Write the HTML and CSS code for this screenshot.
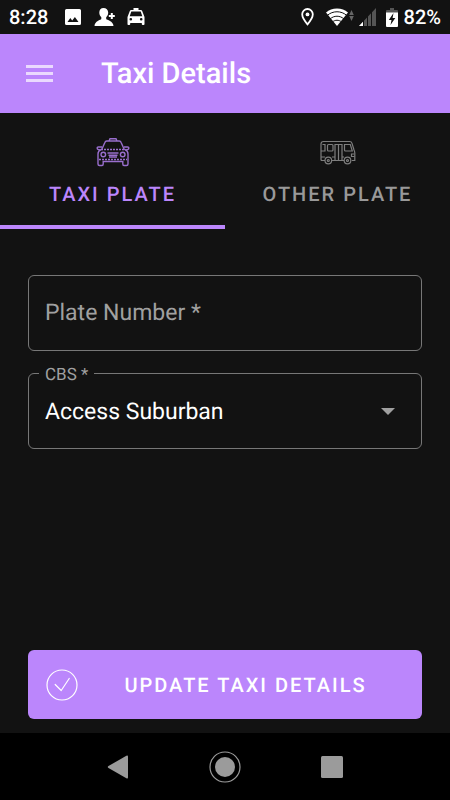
FILE: index.html
```html
<!DOCTYPE html>
<html lang="en">
<head>
    <meta charset="UTF-8">
    <meta name="viewport" content="width=device-width, initial-scale=1.0">
    <title>Taxi Details</title>
    <link rel="stylesheet" href="styles.css">
</head>
<body>
    <div class="status-bar">
        <div class="status-left">
            <span class="status-time">8:28</span>
            <svg class="status-photo" width="18" height="18" viewBox="0 0 18 18" fill="#fff">
                <path fill-rule="evenodd" d="M2.500 1h13a1.500 1.500 0 0 1 1.500 1.500v13a1.500 1.500 0 0 1-1.500 1.500h-13A1.500 1.500 0 0 1 1 15.500v-13A1.500 1.500 0 0 1 2.500 1zM3.500 14h11l-3.600-5-2.700 3.400L6.300 10z"/>
            </svg>
            <svg class="status-person" width="21" height="20" viewBox="0 0 21 20" fill="#fff">
                <path d="M9.500 1c-2.700 0-4.200 2-4.200 4.500 0 2 .8 3.700 2 4.700v1.900c-.6 1-6.500 2-6.800 6.900h19c-.3-4.900-6.700-5.900-7.300-6.900v-1.900c1.200-1 2-2.700 2-4.700C14.200 3 12.200 1 9.500 1z"/>
                <path d="M17.800 6v6M14.800 9h6" stroke="#121212" stroke-width="4"/>
                <path d="M17.800 6v6M14.800 9h6" stroke="#fff" stroke-width="2"/>
            </svg>
            <svg class="status-taxi" width="18" height="18" viewBox="0 0 18 18" fill="#fff">
                <path fill-rule="evenodd" d="M6.500 0h5v2h2.300c.7 0 1.200.4 1.400 1L17.500 9v7.200c0 .5-.4.800-.8.800h-1c-.5 0-.9-.3-.9-.8V15H3.200v1.200c0 .5-.4.800-.9.800h-1c-.4 0-.8-.3-.8-.8V9l2.300-6c.2-.6.700-1 1.400-1h2.300zM4.300 3.500L2.700 8.200h12.600l-1.600-4.700zM3.800 10a1.300 1.300 0 1 0 0 2.600 1.300 1.300 0 0 0 0-2.600zM14.200 10a1.300 1.300 0 1 0 0 2.600 1.300 1.300 0 0 0 0-2.600z"/>
            </svg>
        </div>
        <div class="status-right">
            <svg class="status-pin" width="13" height="18" viewBox="0 0 13 18" fill="none" stroke="#fff" stroke-width="1.800">
                <path d="M6.500 1a5.300 5.300 0 0 0-5.300 5.300c0 3.900 5.300 10 5.300 10s5.300-6.100 5.300-10A5.300 5.300 0 0 0 6.500 1z"/>
                <circle cx="6.500" cy="6.400" r="1.900" fill="#fff" stroke="none"/>
            </svg>
            <svg class="status-wifi" width="28" height="18" viewBox="0 0 28 18">
                <path d="M11 18L0 4.500C3 2 6.700.5 11 .5S19 2 22 4.500z" fill="#fff"/>
                <path d="M1.200 7.500c5.500-5 14.100-5 19.600 0M4 11c4-3.700 10-3.700 14 0M6.500 13.900c2.600-2.200 6.400-2.200 9 0" fill="none" stroke="#121212" stroke-width="1"/>
                <path d="M25.500 2l2.300 5h-4.600zM25.500 13l2.300-5h-4.600z" fill="#666"/>
            </svg>
            <svg class="status-signal" width="17" height="18" viewBox="0 0 17 18">
                <path d="M17 0v18H0z" fill="#555"/>
                <path d="M0 18l4-4.200V18z" fill="#fff"/>
                <path d="M4.500 12v6M8.500 8v10M12.500 4v14" stroke="#121212" stroke-width="1"/>
            </svg>
            <svg class="status-battery" width="12" height="19" viewBox="0 0 12 19">
                <path d="M4 0h4v2h3a1 1 0 0 1 1 1v2H0V3a1 1 0 0 1 1-1h3z" fill="#555"/>
                <path d="M0 4.500h12V18a1 1 0 0 1-1 1H1a1 1 0 0 1-1-1z" fill="#fff"/>
                <path d="M7.500 5L2.800 12h2.700l-1 5L9.300 10H6.600z" fill="#121212"/>
            </svg>
            <span>82%</span>
        </div>
    </div>

    <header class="app-bar">
        <button class="menu-button" type="button" aria-label="Menu">
            <span></span>
            <span></span>
            <span></span>
        </button>
        <h1 class="app-title">Taxi Details</h1>
    </header>

    <nav class="tabs" role="tablist">
        <button class="tab active" type="button" role="tab" aria-selected="true">
            <svg width="34" height="30" viewBox="0 0 34 30" fill="none" stroke="currentColor" stroke-width="1.400">
                <path d="M13 4l1-2.300h6L21 4M5.500 13L9 5.200Q9.400 4 10.700 4h12.600q1.300 0 1.700 1.200L28.500 13"/>
                <path d="M6 10H2.500Q1 10 1.200 11.300 1.500 12.800 4.300 13M28 10h3.500q1.500 0 1.300 1.300-.3 1.500-3.100 1.700"/>
                <path d="M5 12.500Q2 14 2 17v10q0 1.500 1.500 1.500H6q1.200 0 1.200-1.500v-2.500h19.600V27q0 1.500 1.200 1.500h2.500q1.500 0 1.500-1.500V17q0-3-3-4.500"/>
                <path d="M5 12.500h24M3 22.500h28" stroke-dasharray="2 1"/>
                <circle cx="7.300" cy="17.500" r="2.300"/>
                <circle cx="26.700" cy="17.500" r="2.300"/>
                <path d="M11.500 16h11M12.500 18.200h9M13 20h8"/>
            </svg>
            TAXI PLATE
        </button>
        <button class="tab" type="button" role="tab" aria-selected="false">
            <svg width="36" height="30" viewBox="0 0 36 30" fill="none" stroke="currentColor" stroke-width="1.200">
                <path d="M5 23.500H2q-1 0-1-1V7q0-2.500 2.500-2.500h26q2 0 2.500 1.800L34 13q.8 1.500.8 3v7.500h-3M11.500 23.500H24"/>
                <circle cx="8.300" cy="23.500" r="3.300"/>
                <circle cx="8.300" cy="23.500" r="1"/>
                <circle cx="27.500" cy="23.500" r="3.300"/>
                <circle cx="27.500" cy="23.500" r="1"/>
                <path d="M1 14h4V7.500H2.500"/>
                <rect x="7.500" y="7.500" width="5.500" height="6.500" rx="1"/>
                <path d="M15 23V7.500h7V23M18.500 8v15M1 20h4M12 20h3M22 20h2"/>
                <path d="M24.500 7.500h5.800l2 6.500h-6.800q-1 0-1-1zM34 17h-2.500v2.500h3"/>
            </svg>
            OTHER PLATE
        </button>
    </nav>

    <main class="content">
        <form class="taxi-form">
            <div class="field">
                <input class="field-control" type="text" id="plateNumber" placeholder=" ">
                <label class="field-label" for="plateNumber">Plate Number *</label>
            </div>

            <div class="field">
                <select class="field-control" id="cbs">
                    <option>Access Suburban</option>
                </select>
                <label class="field-label" for="cbs">CBS *</label>
                <svg class="field-arrow" width="14" height="7" viewBox="0 0 14 7" fill="#a0a0a0">
                    <path d="M0 0h14L7 7z"/>
                </svg>
            </div>

            <button class="update-button" type="submit">
                <svg width="32" height="32" viewBox="0 0 32 32" fill="none" stroke="#fff" stroke-width="1.200" stroke-linecap="round">
                    <circle cx="16" cy="16" r="15"/>
                    <path d="M9.200 15.500l6 6L23.200 9.500" stroke-linejoin="round"/>
                </svg>
                <span>UPDATE TAXI DETAILS</span>
            </button>
        </form>
    </main>

    <footer class="nav-bar">
        <button type="button" aria-label="Back">
            <svg width="22" height="24" viewBox="0 0 22 24" fill="#9b9b9b">
                <path d="M19.400.8q1.600-.8 1.600 1v20.400q0 1.800-1.600 1L1.500 13q-1.500-1 0-2z"/>
            </svg>
        </button>
        <button type="button" aria-label="Home">
            <svg width="32" height="32" viewBox="0 0 32 32" fill="#9b9b9b">
                <circle cx="16" cy="16" r="15" fill="none" stroke="#9b9b9b" stroke-width="1.200"/>
                <circle cx="16" cy="16" r="10"/>
            </svg>
        </button>
        <button type="button" aria-label="Recent apps">
            <svg width="22" height="22" viewBox="0 0 22 22" fill="#9b9b9b">
                <rect width="22" height="22" rx="1.500"/>
            </svg>
        </button>
    </footer>
</body>
</html>
```
FILE: styles.css
```css
* {
    box-sizing: border-box;
}
body {
    margin: 0;
    min-height: 100vh;
    display: flex;
    flex-direction: column;
    background: #121212;
    color: #fff;
    font-family: Roboto, sans-serif;
    text-rendering: geometricPrecision;
}
button {
    border: none;
    background: none;
    padding: 0;
    font-family: inherit;
    text-rendering: inherit;
    cursor: pointer;
}
svg {
    display: block;
    flex-shrink: 0;
}

/* Status bar */
.status-bar {
    display: flex;
    justify-content: space-between;
    height: 34px;
    padding: 0 9px;
    font-size: 20px;
    font-weight: 500;
}
.status-left,
.status-right {
    display: flex;
    align-items: center;
}
.status-photo {
    margin-left: 16px;
}
.status-person {
    margin-left: 12px;
}
.status-taxi {
    margin-left: 12px;
}
.status-wifi {
    margin-left: 12px;
}
.status-signal {
    margin-left: 5px;
}
.status-battery {
    margin: 0 6px 0 10px;
}

/* App bar */
.app-bar {
    display: flex;
    align-items: center;
    gap: 48px;
    height: 79px;
    padding: 0 26px;
    background: #bb86fc;
}
.menu-button {
    display: flex;
    flex-direction: column;
    gap: 4px;
    width: 27px;
}
.menu-button span {
    height: 3px;
    background: #ead9fe;
}
.app-title {
    margin: 0;
    font-size: 29px;
    font-weight: 500;
}

/* Tabs */
.tabs {
    display: grid;
    grid-template-columns: 1fr 1fr;
}
.tab {
    display: flex;
    flex-direction: column;
    align-items: center;
    gap: 14px;
    height: 116px;
    padding-top: 24px;
    border-bottom: 4px solid transparent;
    color: #999;
    font-size: 20px;
    font-weight: 500;
    line-height: 26px;
    letter-spacing: 2px;
}
.tab svg {
    opacity: 0.8;
}
.tab.active {
    border-bottom-color: #bb86fc;
    color: #bb86fc;
}

/* Form */
.content {
    flex: 1;
    display: flex;
    padding: 46px 28px 14px;
}
.taxi-form {
    flex: 1;
    display: flex;
    flex-direction: column;
    gap: 22px;
}
.field {
    position: relative;
}
.field-control {
    display: block;
    width: 100%;
    height: 76px;
    padding: 0 16px;
    border: 1px solid #777;
    border-radius: 6px;
    outline: none;
    background: transparent;
    color: #fff;
    font-family: inherit;
    font-size: 23px;
    text-rendering: inherit;
    appearance: none;
}
.field-control:focus {
    border-color: #bb86fc;
}
.field-control option {
    background: #121212;
}
.field-label {
    position: absolute;
    top: -8px;
    left: 11px;
    padding: 0 6px;
    background: #121212;
    color: #a0a0a0;
    font-size: 17px;
    line-height: 20px;
    pointer-events: none;
}
.field-control:placeholder-shown:not(:focus) + .field-label {
    top: 24px;
    font-size: 23px;
    line-height: 28px;
}
.field-arrow {
    position: absolute;
    top: 35px;
    right: 27px;
    pointer-events: none;
}

.update-button {
    display: flex;
    align-items: center;
    height: 69px;
    margin-top: auto;
    padding: 0 9px 0 18px;
    border-radius: 6px;
    background: #bb86fc;
    color: #fff;
    font-size: 20px;
    font-weight: 500;
    letter-spacing: 2px;
}
.update-button span {
    flex: 1;
    text-align: center;
}

/* Navigation bar */
.nav-bar {
    display: flex;
    justify-content: center;
    align-items: center;
    gap: 80px;
    height: 67px;
    background: #000;
}
```
